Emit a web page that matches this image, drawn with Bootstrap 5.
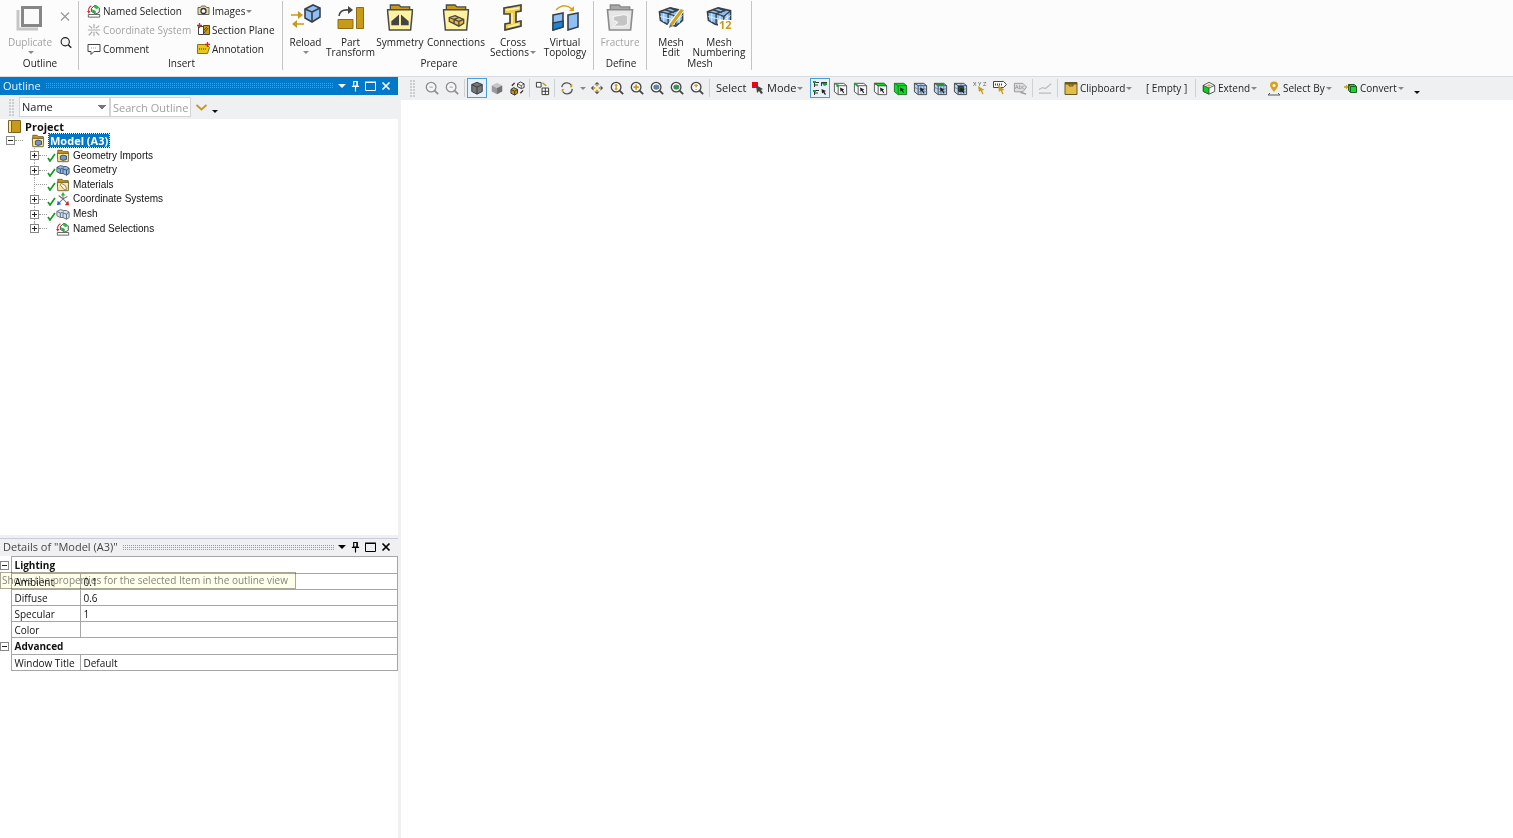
<!DOCTYPE html>
<html lang="en">
<head>
<meta charset="utf-8">
<meta name="viewport" content="width=device-width, initial-scale=1">
<title>Mechanical</title>
<link href="https://cdn.jsdelivr.net/npm/bootstrap@5.3.0/dist/css/bootstrap.min.css" rel="stylesheet">
<style>
:root{--ink:#222;--muted-ink:#a3a3a3;--blue:#0079cb;--chrome:#eef0f2;--line:#a6a6a6}
body{font-family:"Open Sans","Noto Sans",sans-serif;font-size:10px;line-height:10px;color:var(--ink);background:#fff}
svg{display:block;flex:none}
button{background:none;border:0;padding:0;color:inherit;white-space:nowrap}
button:disabled{color:var(--muted-ink)}
.ribbon{height:77px;background:#fcfcfc;border-bottom:1px solid #d9dde2}
.rgroup{height:69px;margin-top:1px;border-right:1px solid #c4c4c4}
.rgroup-body{height:56px}
.rgroup-title{line-height:12px;text-align:center;padding-left:2px}
.big{display:flex;flex-direction:column;align-items:center;height:56px;padding-top:3px}
.big svg{margin-bottom:6px}
.small-cmd{display:flex;align-items:center;height:19px;gap:2px}
.w-45{width:45px}.w-48{width:48px}.w-54{width:54px}.w-56{width:56px}.w-58{width:58px}
.g-outline{width:79px}.g-insert{width:204px}.g-prepare{width:311px}.g-define{width:53px}.g-mesh{width:105px}
.ins-a{width:110px}
.caret{display:inline-block;border:3px solid transparent;border-top-color:#888;border-bottom:0;vertical-align:2px;margin-left:1px}
.caret-lg{display:block;border:4px solid transparent;border-top-color:currentColor;border-bottom:0}
.side{width:398px}
.splitter{width:3px;background:var(--chrome)}
.titlebar{height:18px;font-size:11px;line-height:16px;padding:0 7px 1px 3px}
.titlebar.active{background:var(--blue);color:#e8f4ff}
.titlebar.idle{background:var(--chrome);color:#444;border-top:1px solid #c9ccd4}
.win-btns{gap:5px}
.dots{height:5px;margin:0 4px;background:conic-gradient(currentColor 25%,transparent 0) 0 0/2px 2px;opacity:.3}
.idle .dots{opacity:.5}
.filter{height:24px;padding-left:1px;background:var(--chrome)}
.grip{width:6px;height:17px;background-image:radial-gradient(circle at 1px 1px,#b4b7ba 0 1px,transparent 1px);background-size:3px 3px;opacity:.6}
.filter .form-select,.filter .form-control{height:20px;min-height:0;border:1px solid #d4d4d4;border-radius:0;font-size:11px;line-height:14px;color:#222;padding:0 2px;background-color:#fff}
.filter .form-select{width:91px;background-image:conic-gradient(from -45deg at 50% 100%,transparent 0);background-image:linear-gradient(45deg,transparent 50%,#777 50%),linear-gradient(-45deg,transparent 50%,#777 50%);background-size:4px 4px;background-position:right 7px center,right 3px center}
.filter .form-control{width:81px}
.filter .form-control::placeholder{color:#a0a0a0;opacity:1}
.edge{height:3px;background:var(--chrome)}
.tree{height:117px;font-family:"Liberation Sans",Arial,sans-serif;color:#111}
.tree li{flex:1 1 0;min-height:0;white-space:nowrap}
.tree .chosen{background:var(--blue);color:#fff;outline:1px dotted #333;padding:0 1px}
.proj{font-family:"Open Sans",sans-serif;font-size:11px;line-height:13px}
.node-text{margin-left:3px}
.exp{width:9px;height:9px;border:1px solid #888;background:linear-gradient(#222,#222) center/5px 1px no-repeat,#fff;flex:none}
.exp.plus{background:linear-gradient(#222,#222) center/5px 1px no-repeat,linear-gradient(#222,#222) center/1px 5px no-repeat,#fff}
.root{padding-left:6px}
.stub{width:8px;border-top:1px dotted #999;flex:none}
.stub-long{width:13px;margin-left:4px}
.lvl{padding-left:30px;background:linear-gradient(#aaa 50%,transparent 50%) 34px 0/1px 2px repeat-y}
.lvl:last-child{background:linear-gradient(#aaa,#aaa) 34px 0/1px 5px no-repeat}
.tick{width:9px}
.details{flex:0 0 300px}
.props{width:398px;font-size:10px;line-height:10px;color:#111;table-layout:fixed;border-collapse:collapse}
.props td,.props th{height:16px;border:1px solid var(--line);padding:0 3px;white-space:nowrap;font-weight:400;text-align:left}
.props .cat th{height:17px;font-weight:700}
.props .gut{border:0;width:11px;padding:0}
.props .key{width:69px}
.hint{left:0;top:34px;height:17px;width:296px;border:1px solid #a9a997;background:#ffffec;mix-blend-mode:multiply;color:#85857a;line-height:15px;font-size:10px;padding-left:1px;white-space:nowrap}
.tools{height:23px;background:var(--chrome);font-size:10px;padding:0 0 1px 9px}
.tools .grip{margin-right:6px}
.tb{width:20px;height:20px;display:flex;align-items:center;justify-content:center;flex:none}
.tb.on{border:1px solid #4a9ed6;background:#e6f1fa}
.tb-text{display:flex;align-items:center;gap:2px;flex:none;height:20px;padding-left:4px}
.tb-caret{width:10px;display:flex;justify-content:center;flex:none}
.sep{width:1px;height:18px;margin:0 2px;background:#cfd2d4;flex:none}
.lbl-select{width:35px;font-size:11px}
.w-mode{width:59px;font-size:11px;padding-left:0}
.w-clip{width:82px}.w-empty{width:51px}.w-ext{width:65px}.w-by{width:77px}.w-conv{width:70px}
.more{border:3px solid transparent;border-top-color:#111;border-bottom:0}
</style>
</head>
<body class="d-flex flex-column vh-100 overflow-hidden">
<svg width="0" height="0" class="position-absolute" aria-hidden="true">
<defs>
<symbol id="lens" viewBox="0 0 16 16"><circle cx="7" cy="7" r="5.500" fill="#f5f5f5" stroke="currentColor" stroke-width="1.500"/><path d="M11 11l4 4" stroke="currentColor" stroke-width="2"/></symbol>
<symbol id="named" viewBox="0 0 16 16"><path d="M5 5l4-3.500 5 3v5l-4 2-5-3z" fill="#fff" stroke="#333"/><path d="M7 3l4-1.500 3 2.500-3 2z" fill="#2fb845"/><path d="M6 6l4 2v3L6 8.500z" fill="#1fae36"/><path d="M2 9Q1 4 5 2" fill="none" stroke="#c33" stroke-width="1.200"/><path d="M0 8l2 3 2-3z" fill="#c33"/><path d="M1.500 12h13v3h-13z" fill="#fff" stroke="#555"/></symbol>
<symbol id="folder" viewBox="0 0 16 16"><path d="M2 3V1.500h5L8.500 3H14v3H2z" fill="#c99a16" stroke="#6b5a2a"/><path d="M1.500 5h13L14 14.500H2z" fill="#f8e9a0" stroke="#6b5a2a"/></symbol>
<symbol id="cubes" viewBox="0 0 16 16"><path d="M1 5l4-2 4 1 3 0 3 2v6l-3 2-4-2-3 0-4-2z" fill="#8fb9ee" stroke="#3c4b5e"/><path d="M1 5l4 2v5M5 7l4-1.500M8 7l4 1v6M12 8l3-2M8 7v5" fill="none" stroke="#3c4b5e"/></symbol>
<symbol id="cubespale" viewBox="0 0 16 16"><path d="M1 5l4-2 4 1 3 0 3 2v6l-3 2-4-2-3 0-4-2z" fill="#d3e0ee" stroke="#58677a"/><path d="M1 5l4 2v5M5 7l4-1.500M8 7l4 1v6M12 8l3-2M8 7v5" fill="none" stroke="#58677a"/></symbol>
<symbol id="axes" viewBox="0 0 16 16"><path d="M8 8V3M8 8l5-3M8 8L3 4M8 8l5 5M8 8l-5 5" stroke="#777" stroke-width="1.200"/><path d="M5.500 4L8 0l2.500 4z" fill="#27b83c"/><path d="M10 15l5 0-1-5z" fill="#d22"/><path d="M1 15l1-5 4 4z" fill="#2867cf"/></symbol>
<symbol id="axesgray" viewBox="0 0 16 16"><path d="M8 1v5M8 10v5M2 3l4 3M10 10l4 4M14 3l-4 3M6 10l-4 4M1 8h14" stroke="#aaa" stroke-width="1.300"/></symbol>
<symbol id="tick" viewBox="0 0 9 9"><path d="M1 5l2 3 5-7" fill="none" stroke="#169a22" stroke-width="1.700"/></symbol>
<symbol id="box" viewBox="0 0 16 16"><path d="M1.500 2.500h10l3 2.500v9.500h-9l-4-3z" fill="#f6f7f8" stroke="#555"/><path d="M1.500 2.500l4 2.500h9M5.500 5v9.500" fill="none" stroke="#555"/></symbol>
<symbol id="arrow" viewBox="0 0 16 16"><path d="M7.500 7l.5 4.500 1.300-1 1.700 2.500 1-.8-1.600-2.400 1.600-.8z" fill="#222"/></symbol>
<symbol id="meshbox" viewBox="0 0 16 16"><path d="M1.500 2.500h10l3 2.500v9.500h-9l-4-3z" fill="#b8d6f7" stroke="#444"/><path d="M1.500 2.500l4 2.500h9M5.500 5v9.500" fill="none" stroke="#444"/><path d="M8.500 3v11M11.500 4v10M2 7l3.500 1.500H14M5.500 11.500H14" fill="none" stroke="#54779f" stroke-width=".8"/></symbol>
<symbol id="meshbig" viewBox="0 0 28 26"><path d="M2 8l11-4 13 3v10l-7 6-9-2-7-4z" fill="#8fc0f5" stroke="#3a4048" stroke-width="1.700"/><path d="M2 8l9 2 8 3 7-6M11 10v11M19 13v9M13 4l7 3-9 3M8 6l9 3" fill="none" stroke="#3a4048" stroke-width="1.500"/><path d="M3 13l8 2 8 2 7-5M6.500 9.500v9M15 12v9M22.500 11v9" fill="none" stroke="#e6f2ff"/></symbol>
<symbol id="foldbig" viewBox="0 0 28 28"><path d="M4 8V1h9l2 2h9v5z" fill="#c99a16" stroke="#4b4b4b" stroke-width="1.400"/><path d="M1 6h26l-2 21H3z" fill="#fff2a0" stroke="#4b4b4b" stroke-width="1.600"/></symbol>
<symbol id="pin" viewBox="0 0 10 12"><path d="M3 1h4v5H3zM1 6.500h8M5 7v5M6.500 1v5" fill="none" stroke="currentColor" stroke-width="1.300"/></symbol>
<symbol id="maxi" viewBox="0 0 11 10"><path d="M.5 1.500h10v8H.5zM0 1h11" fill="none" stroke="currentColor"/></symbol>
<symbol id="cross" viewBox="0 0 10 10"><path d="M1.500 1.500l7 7M8.500 1.500l-7 7" stroke="currentColor" stroke-width="1.700"/></symbol>
</defs>
</svg>

<header class="ribbon d-flex flex-shrink-0">
  <section class="rgroup g-outline">
    <div class="rgroup-body d-flex">
      <button class="big w-56 ps-1" disabled><svg width="28" height="27" viewBox="0 0 28 27"><path d="M2 6v19h20" fill="none" stroke="#c6c6c6" stroke-width="3"/><path d="M6.500 3.500h18v18h-18z" fill="#fafafa" stroke="#868686" stroke-width="3"/></svg>Duplicate<span class="caret mt-1"></span></button>
      <div class="d-flex flex-column justify-content-between pt-2 pb-2 ps-1">
        <button aria-label="Delete" disabled><svg width="10" height="15" viewBox="0 0 10 10"><path d="M1 1l8 8M9 1l-8 8" stroke="#999" stroke-width="1.300"/></svg></button>
        <button aria-label="Find"><svg width="12" height="13"><use href="#lens"/></svg></button>
      </div>
    </div>
    <div class="rgroup-title">Outline</div>
  </section>
  <section class="rgroup g-insert">
    <div class="rgroup-body d-flex ps-2">
      <div class="ins-a">
        <button class="small-cmd"><svg width="14" height="14"><use href="#named"/></svg>Named Selection</button>
        <button class="small-cmd" disabled><svg width="14" height="14"><use href="#axesgray"/></svg>Coordinate System</button>
        <button class="small-cmd"><svg width="14" height="14" viewBox="0 0 14 14"><path d="M1 2.500h12v7H7l-3 3v-3H1z" fill="#fff" stroke="#444"/><path d="M4 6h6" stroke="#c99a16" stroke-dasharray="1 1"/></svg>Comment</button>
      </div>
      <div>
        <button class="small-cmd"><svg width="13" height="13" viewBox="0 0 13 13"><path d="M1 3.500h2.500l1-1.500h4l1 1.500H12v7H1z" fill="#e9dba0" stroke="#666"/><circle cx="6.500" cy="7" r="2.500" fill="#fff" stroke="#333" stroke-width="1.300"/></svg><span>Images<span class="caret"></span></span></button>
        <button class="small-cmd"><svg width="13" height="13" viewBox="0 0 13 13"><path d="M1.500 3.500h5v8h-5z" fill="#fff" stroke="#444"/><path d="M6.500 2.500h6v9h-6z" fill="#c99a16" stroke="#444"/><path d="M7 10l4-5M7 7l3-3" stroke="#444"/><path d="M0 2.500h5M2.500 0v5" stroke="#d22" stroke-width="1.300"/></svg>Section Plane</button>
        <button class="small-cmd"><svg width="13" height="13" viewBox="0 0 13 13"><path d="M.5 2.500h9l3 3-2 6H.5z" fill="#e8c81c" stroke="#8b7411"/><path d="M2 7h7" stroke="#8b7411" stroke-width="2" stroke-dasharray="1 1"/><path d="M8 2.500h5M10.500 0v5" stroke="#d22" stroke-width="1.300"/></svg>Annotation</button>
      </div>
    </div>
    <div class="rgroup-title">Insert</div>
  </section>
  <section class="rgroup g-prepare">
    <div class="rgroup-body d-flex">
      <button class="big w-45"><svg width="30" height="27" viewBox="0 0 30 27"><path d="M0 11h10M4 20h9" stroke="#c99a16" stroke-width="1.700"/><path d="M7 7l5 4-5 4zM6 16l-5 4 5 4z" fill="#c99a16"/><path d="M14 5l8-4 7 3v9l-8 5-7-4z" fill="#8fc0f5" stroke="#3a4048" stroke-width="1.600"/><path d="M14 5l7 3v9M21 8l8-4" fill="none" stroke="#3a4048" stroke-width="1.600"/></svg>Reload<span class="caret mt-1"></span></button>
      <button class="big w-45"><svg width="28" height="27" viewBox="0 0 28 27"><path d="M1 15.500h15v9H1z" fill="#c99a16" stroke="#8c6c12"/><path d="M19.500 3.500h7v21h-7z" fill="#c99a16" stroke="#8c6c12"/><path d="M2 12Q3 5 12 6" fill="none" stroke="#444" stroke-width="1.500"/><path d="M11 2l5 4-5 4z" fill="#444"/></svg>Part<br>Transform</button>
      <button class="big w-54"><svg width="28" height="27" viewBox="0 0 28 28"><use href="#foldbig"/><path d="M5 22v-4l8-7v11zM23 22v-4l-8-7v11z" fill="#444"/></svg>Symmetry</button>
      <button class="big w-58"><svg width="28" height="27" viewBox="0 0 28 28"><use href="#foldbig"/><path d="M7 14l6-2 9 4v4l-5 3-10-5z" fill="#e7bb38" stroke="#444" stroke-width="1.300"/><path d="M7 14l10 4v5M17 18l5-2M12 16l5-2M12 16v4" fill="none" stroke="#444" stroke-width="1.300"/></svg>Connections</button>
      <button class="big w-56"><svg width="24" height="27" viewBox="0 0 24 27"><path d="M3 4l17-3v6l-5 1v10l5-1v5L4 26v-6l5-1V10L3 10z" fill="#f1cc45" stroke="#444" stroke-width="1.700"/><path d="M5 6l13-2M11 9v11M7 23l11-3" stroke="#fff4b5" stroke-width="1.500"/></svg>Cross<br><span>Sections<span class="caret"></span></span></button>
      <button class="big w-48"><svg width="28" height="27" viewBox="0 0 28 27"><path d="M2 11l10-2v14L2 26z" fill="#8fc0f5" stroke="#3a4048" stroke-width="1.600"/><path d="M2 19l10-2v6L2 26z" fill="#1685dd" stroke="#3a4048" stroke-width="1.400"/><path d="M17 11l10-2v14l-10 3z" fill="#8fc0f5" stroke="#3a4048" stroke-width="1.600"/><path d="M5 6Q13-2 21 5" fill="none" stroke="#d6a318" stroke-width="1.600"/><path d="M23 2v5h-5z" fill="#d6a318"/></svg>Virtual<br>Topology</button>
    </div>
    <div class="rgroup-title">Prepare</div>
  </section>
  <section class="rgroup g-define">
    <div class="rgroup-body d-flex justify-content-center">
      <button class="big" disabled><svg width="28" height="27" viewBox="0 0 28 28"><path d="M4 8V1h9l2 2h9v5z" fill="#aaa" stroke="#888" stroke-width="1.500"/><path d="M1 6h26l-2 21H3z" fill="#e6e6e6" stroke="#8c8c8c" stroke-width="1.700"/><path d="M7 13l11-2 4 1v9l-4 2H7l5-4-5-2z" fill="#c4c4c4" stroke="#fafafa"/></svg>Fracture</button>
    </div>
    <div class="rgroup-title">Define</div>
  </section>
  <section class="rgroup g-mesh">
    <div class="rgroup-body d-flex">
      <button class="big w-48"><svg width="28" height="27" viewBox="0 0 28 27"><use href="#meshbig" width="28" height="25"/><path d="M25 6L12 23" stroke="#fcfcfc" stroke-width="5"/><path d="M25 6L14 21" stroke="#d6a318" stroke-width="3"/><path d="M12 24l1-4 3 2z" fill="#777"/></svg>Mesh<br>Edit</button>
      <button class="big w-48"><svg width="28" height="27" viewBox="0 0 28 27"><use href="#meshbig" width="28" height="25"/><path d="M13 16h15v11H13z" fill="#fcfcfc"/><text x="14" y="25" font-size="11" font-weight="700" fill="#c99a16">12</text></svg>Mesh<br>Numbering</button>
    </div>
    <div class="rgroup-title">Mesh</div>
  </section>
</header>

<div class="d-flex flex-grow-1 overflow-hidden">
  <aside class="side d-flex flex-column flex-shrink-0">
    <div class="titlebar active d-flex align-items-center">
      <span>Outline</span><span class="dots flex-grow-1"></span>
      <div class="win-btns d-flex align-items-center text-white">
        <button aria-label="Options"><span class="caret-lg"></span></button>
        <button aria-label="Pin"><svg width="9" height="12"><use href="#pin"/></svg></button>
        <button aria-label="Maximize"><svg width="11" height="10"><use href="#maxi"/></svg></button>
        <button aria-label="Close"><svg width="10" height="10"><use href="#cross"/></svg></button>
      </div>
    </div>
    <div class="filter d-flex align-items-center">
      <span class="grip ms-2 me-1"></span>
      <select class="form-select" aria-label="Filter by"><option>Name</option></select>
      <input class="form-control" type="text" placeholder="Search Outline" aria-label="Search Outline">
      <button class="ms-1" aria-label="Expand"><svg width="13" height="9" viewBox="0 0 13 9"><path d="M1.500 2l5 4.500 5-4.500" fill="none" stroke="#c99a16" stroke-width="1.800"/></svg></button>
      <span class="more ms-1 mt-2"></span>
    </div>
    <div class="flex-grow-1 overflow-hidden">
      <ul class="tree list-unstyled d-flex flex-column mb-0" role="tree">
        <li class="d-flex align-items-center ps-2 fw-bold" role="treeitem"><svg width="13" height="13" viewBox="0 0 13 13"><path d="M3.500.5h9v12h-9z" fill="#c99a16" stroke="#7d6320"/><path d="M.5.5h3v12h-3z" fill="#f4e6b0" stroke="#7d6320"/></svg><span class="proj ms-1">Project</span></li>
        <li class="root d-flex align-items-center fw-bold" role="treeitem"><span class="exp"></span><span class="stub me-2"></span><svg width="14" height="14" viewBox="0 0 16 16"><use href="#folder"/><path d="M5 8l3-1 4 1v4l-4 1-3-1z" fill="#6e98cc" stroke="#444"/></svg><span class="proj chosen ms-1">Model (A3)</span></li>
        <li class="lvl d-flex align-items-center" role="treeitem"><span class="exp plus"></span><span class="stub"></span><svg class="tick mt-1" width="9" height="9"><use href="#tick"/></svg><svg width="14" height="14" viewBox="0 0 16 16"><use href="#folder"/><path d="M5 8l3-1 4 1v4l-4 1-3-1z" fill="#6e98cc" stroke="#444"/></svg><span class="node-text">Geometry Imports</span></li>
        <li class="lvl d-flex align-items-center" role="treeitem"><span class="exp plus"></span><span class="stub"></span><svg class="tick mt-1" width="9" height="9"><use href="#tick"/></svg><svg width="14" height="14"><use href="#cubes"/></svg><span class="node-text">Geometry</span></li>
        <li class="lvl d-flex align-items-center" role="treeitem"><span class="stub stub-long"></span><svg class="tick mt-1" width="9" height="9"><use href="#tick"/></svg><svg width="14" height="14" viewBox="0 0 16 16"><use href="#folder"/><path d="M6 6l5 3 1 4-3 0-4-5z" fill="#fff" stroke="#a86b2a"/></svg><span class="node-text">Materials</span></li>
        <li class="lvl d-flex align-items-center" role="treeitem"><span class="exp plus"></span><span class="stub"></span><svg class="tick mt-1" width="9" height="9"><use href="#tick"/></svg><svg width="14" height="14"><use href="#axes"/></svg><span class="node-text">Coordinate Systems</span></li>
        <li class="lvl d-flex align-items-center" role="treeitem"><span class="exp plus"></span><span class="stub"></span><svg class="tick mt-1" width="9" height="9"><use href="#tick"/></svg><svg width="14" height="14"><use href="#cubespale"/></svg><span class="node-text">Mesh</span></li>
        <li class="lvl d-flex align-items-center" role="treeitem"><span class="exp plus"></span><span class="stub"></span><span class="tick"></span><svg width="14" height="14"><use href="#named"/></svg><span class="node-text">Named Selections</span></li>
      </ul>
    </div>
    <div class="edge flex-shrink-0"></div>
    <section class="details position-relative">
      <div class="titlebar idle d-flex align-items-center">
        <span>Details of "Model (A3)"</span><span class="dots flex-grow-1"></span>
        <div class="win-btns d-flex align-items-center text-black">
          <button aria-label="Options"><span class="caret-lg"></span></button>
          <button aria-label="Pin"><svg width="9" height="12"><use href="#pin"/></svg></button>
          <button aria-label="Maximize"><svg width="11" height="10"><use href="#maxi"/></svg></button>
          <button aria-label="Close"><svg width="10" height="10"><use href="#cross"/></svg></button>
        </div>
      </div>
      <table class="props">
        <colgroup><col style="width:11px"><col style="width:69px"><col></colgroup>
        <tbody>
        <tr class="cat"><td class="gut"><span class="exp d-block"></span></td><th colspan="2">Lighting</th></tr>
        <tr><td class="gut"></td><th class="key" scope="row">Ambient</th><td>0.1</td></tr>
        <tr><td class="gut"></td><th class="key" scope="row">Diffuse</th><td>0.6</td></tr>
        <tr><td class="gut"></td><th class="key" scope="row">Specular</th><td>1</td></tr>
        <tr><td class="gut"></td><th class="key" scope="row">Color</th><td></td></tr>
        <tr class="cat"><td class="gut"><span class="exp d-block"></span></td><th colspan="2">Advanced</th></tr>
        <tr><td class="gut"></td><th class="key" scope="row">Window Title</th><td>Default</td></tr>
        </tbody>
      </table>
      <div class="hint position-absolute" role="tooltip">Shows the properties for the selected Item in the outline view</div>
    </section>
  </aside>
  <div class="splitter flex-shrink-0"></div>
  <main class="flex-grow-1 overflow-hidden">
    <div class="tools d-flex align-items-center" role="toolbar" aria-label="Graphics">
      <span class="grip"></span>
      <button class="tb" aria-label="Zoom previous" disabled><svg width="14" height="14" viewBox="0 0 16 16" color="#8e8e8e"><use href="#lens"/><path d="M5 7h4" stroke="#999"/></svg></button>
      <button class="tb" aria-label="Zoom next" disabled><svg width="14" height="14" viewBox="0 0 16 16" color="#8e8e8e"><use href="#lens"/><path d="M5 7h4" stroke="#999"/></svg></button>
      <span class="sep"></span>
      <button class="tb on" aria-label="Shaded with edges"><svg width="14" height="14" viewBox="0 0 16 16"><path d="M2 4l6-2.500L14 4v8l-6 3-6-3z" fill="#777" stroke="#333"/><path d="M2 4l6 3 6-3M8 7v8" fill="none" stroke="#333"/></svg></button>
      <button class="tb" aria-label="Shaded"><svg width="14" height="14" viewBox="0 0 16 16"><path d="M2 5l6-3 6 3-6 3z" fill="#c6c6c6"/><path d="M2 5l6 3v7l-6-3z" fill="#9a9a9a"/><path d="M14 5L8 8v7l6-3z" fill="#737373"/></svg></button>
      <button class="tb" aria-label="Show mesh"><svg width="15" height="15" viewBox="0 0 16 16"><path d="M1 9l3-2 4 2v4l-3 2-4-2z" fill="#c99a16" stroke="#333"/><path d="M1 9l4 2v4M5 11l3-2" fill="none" stroke="#333"/><path d="M8 3l3-2 4 2v4l-3 1-4-2z" fill="#fff" stroke="#333"/><path d="M8 3l4 2v3M12 5l3-2" fill="none" stroke="#333" stroke-width=".8"/><path d="M2 5l3-3M11 13l3-3" stroke="#333" stroke-width="1.500"/></svg></button>
      <span class="sep"></span>
      <button class="tb" aria-label="Viewports"><svg width="15" height="15" viewBox="0 0 16 16"><path d="M1.500 1.500h5v5h-5zM7.500 7.500h7v7h-7zM11 7.500v7M7.500 11h7" fill="#fff" stroke="#333"/><path d="M8 2l4 3" stroke="#c99a16" stroke-width="1.500"/></svg></button>
      <span class="sep"></span>
      <button class="tb" aria-label="Rotate"><svg width="14" height="14" viewBox="0 0 16 16"><path d="M2 7a6 6 0 0111-2M14 9A6 6 0 013 12" fill="none" stroke="#555" stroke-width="1.500"/><path d="M14 3v4h-3zM2 13V9h3z" fill="#c99a16"/></svg></button>
      <button class="tb-caret" aria-label="Rotate menu"><span class="caret"></span></button>
      <button class="tb" aria-label="Pan"><svg width="14" height="14" viewBox="0 0 16 16"><path d="M8 1l3 3H5zM8 15l3-3H5zM1 8l3-3v6zM15 8l-3-3v6z" fill="#555"/><path d="M8 4v2M8 10v2M4 8h2M10 8h2" stroke="#d6a318" stroke-width="2.500"/></svg></button>
      <button class="tb" aria-label="Zoom"><svg width="14" height="14" viewBox="0 0 16 16" color="#444"><use href="#lens"/><path d="M7 3.500v7M5.500 5h3M5.500 9h3" stroke="#c99a16" stroke-width="1.500"/></svg></button>
      <button class="tb" aria-label="Zoom in"><svg width="14" height="14" viewBox="0 0 16 16" color="#444"><use href="#lens"/><path d="M7 4v6M4 7h6" stroke="#c99a16" stroke-width="2"/></svg></button>
      <button class="tb" aria-label="Zoom to fit"><svg width="14" height="14" viewBox="0 0 16 16" color="#444"><use href="#lens"/><path d="M4.500 5.500L7 4.500l3 1v3l-3 1-2.500-1z" fill="#5b85b8" stroke="#5a6f8a"/></svg></button>
      <button class="tb" aria-label="Zoom to selection"><svg width="14" height="14" viewBox="0 0 16 16" color="#444"><use href="#lens"/><path d="M4.500 5.500L7 4.500l3 1v3l-3 1-2.500-1z" fill="#2c9d45" stroke="#4d7a57"/></svg></button>
      <button class="tb" aria-label="Box zoom"><svg width="14" height="14" viewBox="0 0 16 16" color="#444"><use href="#lens"/><path d="M7 4v3M7 9v1M5 5h4" stroke="#c99a16" stroke-width="1.700"/></svg></button>
      <span class="sep"></span>
      <span class="lbl-select ms-1">Select</span>
      <button class="tb-text w-mode"><svg width="14" height="14" viewBox="0 0 14 14"><path d="M1 1h6v6H1z" fill="#f00018"/><path d="M5 4l1 8 2-2 2 3 2-1-2-3 2-1z" fill="#444"/></svg><span>Mode<span class="caret"></span></span></button>
      <button class="tb on" aria-label="Smart select"><svg width="16" height="16" viewBox="0 0 16 16"><path d="M2.500 7V2.500H7M2.500 5H6M2.500 15v-4.500H7M2.500 13H6" fill="none" stroke="#333"/><path d="M9 2h6v3l-3 1z" fill="#1b9c35"/><path d="M9.500 6V2.500H15" fill="none" stroke="#333"/><path d="M1 1h3v2H1zM1 10h3v2H1z" fill="#12a52c"/><use href="#arrow" width="16" height="16" x="2" y="2"/></svg></button>
      <button class="tb" aria-label="Vertex"><svg width="15" height="15" viewBox="0 0 16 16"><use href="#box"/><circle cx="5" cy="5" r="1.500" fill="#1ca838"/><use href="#arrow"/></svg></button>
      <button class="tb" aria-label="Edge"><svg width="15" height="15" viewBox="0 0 16 16"><use href="#box"/><path d="M1.500 2.500l4 3" fill="none" stroke="#1ca838" stroke-width="2"/><use href="#arrow"/></svg></button>
      <button class="tb" aria-label="Face"><svg width="15" height="15" viewBox="0 0 16 16"><use href="#box"/><path d="M1.500 2.500h10l3 2.500h-9z" fill="#0ce022" stroke="#25702c"/><use href="#arrow"/></svg></button>
      <button class="tb" aria-label="Body"><svg width="15" height="15" viewBox="0 0 16 16"><path d="M1.500 2.500h10l3 2.500v9.500h-9l-4-3z" fill="#0ce022" stroke="#25702c"/><path d="M1.500 2.500l4 2.500h9M5.500 5v9.500" fill="none" stroke="#25702c"/><use href="#arrow"/></svg></button>
      <button class="tb" aria-label="Node"><svg width="15" height="15" viewBox="0 0 16 16"><use href="#meshbox"/><use href="#arrow"/></svg></button>
      <button class="tb" aria-label="Element face"><svg width="15" height="15" viewBox="0 0 16 16"><use href="#meshbox"/><path d="M4 4h8" stroke="#1b9c35" stroke-width="2"/><use href="#arrow"/></svg></button>
      <button class="tb" aria-label="Element"><svg width="15" height="15" viewBox="0 0 16 16"><use href="#meshbox"/><path d="M6 6h5v5H6z" fill="#13762a" stroke="#222"/><use href="#arrow"/></svg></button>
      <button class="tb" aria-label="Coordinates"><svg width="16" height="16" viewBox="0 0 16 16"><text x="1" y="6" font-size="6" fill="#555">X Y Z</text><path d="M6 6l1 6 1.500-1.500 2 4 1-1-1.500-3 2.500-.5z" fill="#c99a16"/></svg></button>
      <button class="tb" aria-label="Probe"><svg width="16" height="16" viewBox="0 0 16 16"><path d="M1.500 1.500h10l3 3-3 3h-10z" fill="#fff" stroke="#444"/><path d="M3 4.500h8" stroke="#444" stroke-width="2" stroke-dasharray="1 1"/><path d="M6 5l1 7 1.500-1.500 2 4 1-1-1.500-3 2.500-.5z" fill="#c99a16"/></svg></button>
      <button class="tb" aria-label="Label" disabled><svg width="15" height="15" viewBox="0 0 16 16"><path d="M1.500 2.500h9l4 4-4 5h-9z" fill="#ddd" stroke="#999"/><text x="2" y="9" font-size="6" fill="#888">Abc</text><path d="M8 12l6 2" stroke="#999" stroke-width="1.500"/></svg></button>
      <span class="sep"></span>
      <button class="tb" aria-label="Path" disabled><svg width="15" height="15" viewBox="0 0 16 16"><path d="M1 9l4-2 3 1 6-5M1 13h13" fill="none" stroke="#bbb" stroke-width="1.300"/></svg></button>
      <span class="sep"></span>
      <button class="tb-text w-clip"><svg width="14" height="14" viewBox="0 0 14 14"><path d="M1 1.500h12v12H1z" fill="#e3be47" stroke="#69582a"/><path d="M1 1.500h12v2H1z" fill="#69582a"/><path d="M5 5V3h4v2z" fill="#c99a16" stroke="#69582a"/></svg><span>Clipboard<span class="caret"></span></span></button>
      <button class="tb-text w-empty">[ Empty ]</button>
      <span class="sep"></span>
      <button class="tb-text w-ext"><svg width="14" height="14" viewBox="0 0 16 16"><path d="M1.500 5L8 1.500 14.500 5v7L8 15l-6.500-3z" fill="#fff" stroke="#444"/><path d="M1.500 5L8 8v7l-6.500-3z" fill="#0cce22" stroke="#444"/><path d="M8 8l6.500-3" stroke="#444"/><path d="M5 5h6M8 3v4" stroke="#c99a16"/></svg><span>Extend<span class="caret"></span></span></button>
      <button class="tb-text w-by"><svg width="14" height="15" viewBox="0 0 14 15"><path d="M7 11Q3 6 3 4.500a4 4 0 018 0Q11 6 7 11z" fill="#d6a318"/><circle cx="7" cy="4.500" r="1.500" fill="#fff"/><path d="M3 12l-2 2h12l-2-2" fill="none" stroke="#555"/></svg><span>Select By<span class="caret"></span></span></button>
      <button class="tb-text w-conv"><svg width="14" height="14" viewBox="0 0 14 14"><path d="M4.500 3.500h6l2 2v6h-6l-2-2z" fill="#0ce022" stroke="#245c28"/><path d="M4.500 3.500l2 2h6M6.500 5.500v6" fill="none" stroke="#245c28"/><path d="M0 6h3" stroke="#c99a16" stroke-width="1.500"/><path d="M2 3.500L4.500 6 2 8.500z" fill="#c99a16"/></svg><span>Convert<span class="caret"></span></span></button>
      <span class="more ms-1 mt-2"></span>
    </div>
  </main>
</div>
<script src="https://cdn.jsdelivr.net/npm/bootstrap@5.3.0/dist/js/bootstrap.bundle.min.js"></script>
</body>
</html>
